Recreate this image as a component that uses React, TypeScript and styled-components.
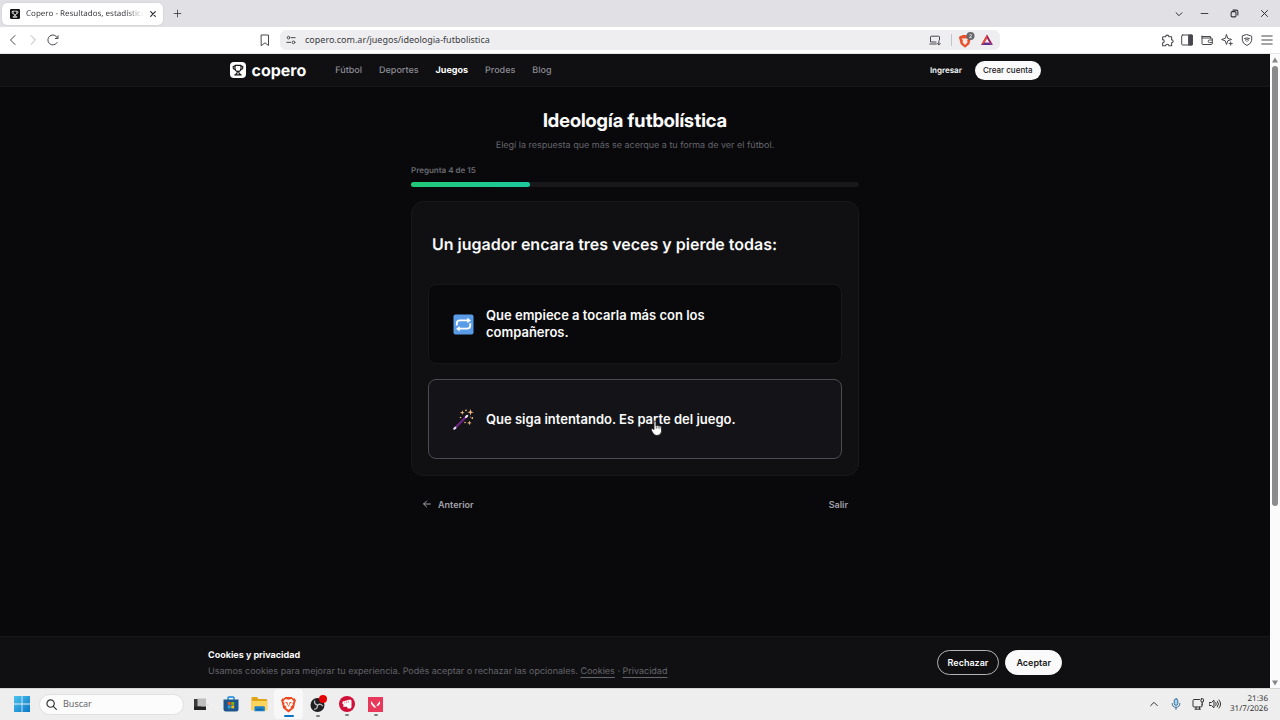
import React from "react";
import styled, { createGlobalStyle } from "styled-components";

const GlobalStyle = createGlobalStyle`
  * { box-sizing: border-box; }
  body { margin: 0; background: #09090b; text-rendering: geometricPrecision; }
  button, input { font: inherit; color: inherit; }
  button { border: 0; padding: 0; background: none; cursor: pointer; }
  h1, h2, p { margin: 0; }
  svg { display: block; flex: none; }
`;

const ui = `"Noto Sans", "Open Sans", sans-serif`;
const site = `Inter, "Liberation Sans", sans-serif`;

const Screen = styled.div`
  display: flex;
  flex-direction: column;
  min-height: 100vh;
  font-family: ${ui};
`;

/* Browser chrome */

const TabStrip = styled.div`
  display: flex;
  align-items: center;
  height: 27px;
  padding: 0 1px 0 2px;
  background: #e0e0e5;
  color: #2c2c33;
`;

const Tab = styled.div`
  display: flex;
  align-items: center;
  width: 161px;
  height: 22px;
  padding: 0 5px 0 8px;
  border-radius: 5px;
  background: #fff;
  box-shadow: 0 0 2px #0002;
`;

const TabTitle = styled.span`
  flex: 1;
  min-width: 0;
  margin: 0 4px 0 6px;
  overflow: hidden;
  white-space: nowrap;
  font-size: 8px;
  line-height: 14px;
  color: #3c3c43;
  mask-image: linear-gradient(90deg, #000 85%, transparent);
`;

const IconButton = styled.button<{ $w?: number; $dim?: boolean }>`
  display: flex;
  align-items: center;
  justify-content: center;
  width: ${(p) => p.$w ?? 20}px;
  height: 20px;
  flex: none;
  opacity: ${(p) => (p.$dim ? 0.4 : 1)};
`;

const Group = styled.div<{ $end?: boolean }>`
  display: flex;
  align-items: center;
  margin-left: ${(p) => (p.$end ? "auto" : 0)};
`;

const Toolbar = styled.div`
  display: grid;
  grid-template-columns: minmax(90px, 1fr) minmax(0, 720px) minmax(126px, 1fr);
  align-items: center;
  height: 27px;
  padding: 0 3px;
  background: #fff;
  color: #48484f;
  border-bottom: 1px solid #e6e6ea;
`;

const NavGroup = styled(Group)`
  padding-right: 5px;
`;

const AddressBar = styled.div`
  display: flex;
  align-items: center;
  height: 20px;
  padding: 0 3px 0 1px;
  border-radius: 6px;
  background: #eeeef1;
`;

const AddressInput = styled.input`
  flex: 1;
  min-width: 0;
  margin-left: 4px;
  padding: 0;
  border: 0;
  outline: 0;
  background: none;
  font-size: 9px;
  line-height: 16px;
  color: #3a3a40;
`;

const Separator = styled.span`
  width: 1px;
  height: 12px;
  margin: 0 3px 0 6px;
  background: #c4c4ca;
`;

/* Page viewport */

const Viewport = styled.div`
  display: flex;
  flex: 1;
`;

const Site = styled.div`
  display: flex;
  flex: 1;
  flex-direction: column;
  min-width: 0;
  background: #09090b;
  color: #fafafa;
  font-family: ${site};
`;

const ScrollBar = styled.div`
  display: flex;
  flex-direction: column;
  align-items: center;
  justify-content: space-between;
  width: 10px;
  padding: 3px 0 2px;
  background: #fbfbfb;
  color: #85858a;
`;

const ScrollThumb = styled.div`
  width: 6px;
  flex: 0 0 70%;
  margin: 3px 0 auto;
  border-radius: 3px;
  background: #8b8b8e;
`;

const SiteHeader = styled.header`
  background: #101013;
  border-bottom: 1px solid #17171a;
`;

const HeaderInner = styled.div`
  display: flex;
  align-items: center;
  max-width: 811px;
  height: 32px;
  margin: 0 auto;
`;

const Brand = styled.a`
  display: flex;
  align-items: center;
  gap: 6px;
  margin-right: 29px;
  color: #fff;
  text-decoration: none;
  font-size: 16px;
  font-weight: 700;
  line-height: 20px;
`;

const Nav = styled.nav`
  display: flex;
  gap: 17px;
  padding-top: 2px;
`;

const NavLink = styled.a<{ $active?: boolean }>`
  color: ${(p) => (p.$active ? "#fff" : "#8c8c94")};
  font-size: 9px;
  font-weight: ${(p) => (p.$active ? 700 : 500)};
  line-height: 14px;
  text-decoration: none;
`;

const Account = styled.div`
  display: flex;
  align-items: center;
  gap: 13px;
  margin-left: auto;
`;

const SignIn = styled.a`
  color: #fafafa;
  font-size: 8px;
  font-weight: 600;
  line-height: 14px;
  text-decoration: none;
`;

const SignUp = styled.button`
  height: 19px;
  padding: 0 8px;
  border-radius: 10px;
  background: #fafafa;
  color: #18181b;
  font-size: 8px;
  font-weight: 500;
`;

const Main = styled.main`
  flex: 1;
  width: 100%;
  max-width: 448px;
  margin: 0 auto;
  padding-top: 20px;
`;

const Title = styled.h1`
  font-family: "Inter Display", ${site};
  font-size: 19px;
  font-weight: 700;
  line-height: 28px;
  text-align: center;
`;

const Subtitle = styled.p`
  margin-top: 4px;
  color: #65656c;
  font-size: 9px;
  line-height: 14px;
  text-align: center;
`;

const Step = styled.p`
  margin: 11px 0 6px;
  color: #6b6b72;
  font-size: 8px;
  font-weight: 600;
  line-height: 12px;
`;

const Track = styled.div`
  height: 5px;
  border-radius: 3px;
  background: #18181b;
`;

const Fill = styled.div`
  height: 100%;
  border-radius: 3px;
  background: linear-gradient(90deg, #22c877, #1cc89c);
`;

const Card = styled.section`
  margin-top: 14px;
  padding: 16px;
  border: 1px solid #18181b;
  border-radius: 12px;
  background: #101013;
`;

const Question = styled.h2`
  padding: 16px 4px 30px;
  font-size: 16px;
  font-weight: 600;
  line-height: 20px;
`;

const Options = styled.div`
  display: grid;
  gap: 15px;
`;

const Option = styled.button<{ $hover?: boolean }>`
  position: relative;
  display: flex;
  align-items: center;
  gap: 12px;
  width: 100%;
  min-height: 80px;
  padding: 8px 100px 8px 24px;
  border: 1px solid ${(p) => (p.$hover ? "#4b4b52" : "#18181b")};
  border-radius: 8px;
  background: ${(p) => (p.$hover ? "#141418" : "#09090b")};
  color: #fafafa;
  font-size: 13px;
  font-weight: 600;
  line-height: 17px;
  text-align: left;
`;

const Pointer = styled.svg`
  position: absolute;
  top: 40px;
  left: 221px;
`;

const Footer = styled.div`
  display: flex;
  justify-content: space-between;
  margin-top: 14px;
  padding: 0 11px;
`;

const TextButton = styled.button`
  display: flex;
  align-items: center;
  gap: 6px;
  height: 28px;
  color: #a1a1aa;
  font-size: 9px;
  font-weight: 600;
`;

const CookieBar = styled.aside`
  border-top: 1px solid #18181b;
  background: #101012;
`;

const CookieInner = styled.div`
  display: flex;
  align-items: center;
  gap: 6px;
  max-width: 854px;
  height: 51px;
  margin: 0 auto;
`;

const CookieCopy = styled.div`
  flex: 1;
  padding-top: 2px;
  font-size: 9px;
  line-height: 16px;
  color: #65656c;
`;

const CookieTitle = styled.h2`
  color: #fafafa;
  font-size: 9px;
  font-weight: 700;
  line-height: 16px;
`;

const CookieLink = styled.a`
  color: inherit;
  text-underline-offset: 3px;
`;

const Pill = styled.button<{ $solid?: boolean }>`
  height: 25px;
  padding: 0 10px;
  border: 1px solid ${(p) => (p.$solid ? "#fafafa" : "#b4b4b8")};
  border-radius: 13px;
  background: ${(p) => (p.$solid ? "#fafafa" : "transparent")};
  color: ${(p) => (p.$solid ? "#18181b" : "#fafafa")};
  font-size: 9px;
  font-weight: 600;
`;

/* Desktop task bar */

const TaskBar = styled.footer`
  display: flex;
  align-items: center;
  height: 32px;
  padding: 0 12px 1px 7px;
  border-top: 1px solid #d6d6d6;
  background: #eeeeee;
  color: #333;
`;

const TaskButton = styled.button<{ $state?: "open" | "active" }>`
  display: flex;
  flex-direction: column;
  align-items: center;
  justify-content: center;
  width: 29px;
  height: 30px;
  flex: none;
  border-radius: 4px;
  background: ${(p) => (p.$state === "active" ? "#f8f8f8" : "none")};
  &::after {
    content: "";
    width: ${(p) => (p.$state === "active" ? 10 : 4)}px;
    height: 2px;
    margin: 2px 0 -4px;
    border-radius: 1px;
    background: ${(p) =>
      p.$state === "active" ? "#0a74c4" : p.$state === "open" ? "#808080" : "transparent"};
  }
`;

const SearchField = styled.label`
  display: flex;
  align-items: center;
  gap: 6px;
  width: 145px;
  height: 21px;
  margin: 0 3px;
  padding: 0 6px;
  border: 1px solid #e0e0e0;
  border-radius: 11px;
  background: #fcfcfc;
`;

const SearchInput = styled.input`
  width: 100%;
  min-width: 0;
  padding: 0;
  border: 0;
  outline: 0;
  background: none;
  font-size: 9px;
  line-height: 14px;
  &::placeholder { color: #666; opacity: 1; }
`;

const Clock = styled.time`
  margin-left: 8px;
  font-size: 8px;
  line-height: 10px;
  text-align: right;
  color: #333;
`;

const Line = ({ size = 12, w = 1, children }: { size?: number; w?: number; children: React.ReactNode }) => (
  <svg width={size} height={size} viewBox="0 0 12 12" fill="none" stroke="currentColor" strokeWidth={w} strokeLinecap="round" strokeLinejoin="round" aria-hidden="true">
    {children}
  </svg>
);

const Trophy = ({ size, box, ink, radius }: { size: number; box: string; ink: string; radius: number }) => (
  <svg width={size} height={size} viewBox="0 0 16 16" fill="none" aria-hidden="true">
    <rect width="16" height="16" rx={radius} fill={box} />
    <g stroke={ink} strokeWidth="1.1" strokeLinejoin="round" strokeLinecap="round">
      <path d="M5 3.4h6v2.8C11 8.2 9.7 9.4 8 9.4S5 8.2 5 6.200z" />
      <path d="M5 4.300H3.200v.9C3.200 6.700 4.200 7.400 5.300 7.400M11 4.300h1.800v.9c0 1.500-1 2.200-2.100 2.200" />
      <path d="M7.200 9.400v1.400L5.400 12.700h5.200L8.800 10.800V9.400M4.800 12.900h6.400" />
    </g>
  </svg>
);

const RepeatEmoji = () => (
  <svg width="21" height="21" viewBox="0 0 21 21" fill="none" aria-hidden="true">
    <rect x="0.500" y="0.500" width="20" height="20" rx="2" fill="#5a9be8" />
    <path d="M3.800 11.500V9.500Q3.800 6.400 7 6.400h9M17.200 9.300v2.200q0 3.200-3.200 3.200H5" stroke="#fff" strokeWidth="1.800" />
    <path d="M14.300 3.600l3.600 2.800-3.600 2.800zM6.700 11.900l-3.600 2.800 3.600 2.800z" fill="#fff" />
  </svg>
);

const WandEmoji = () => (
  <svg width="21" height="21" viewBox="0 0 21 21" aria-hidden="true">
    <path d="M2 19L13.500 7.500" stroke="#6b2480" strokeWidth="2.400" strokeLinecap="round" />
    <path d="M1.300 19.700l1-1M13 8l1.200-1.200" stroke="#e8dff0" strokeWidth="2.200" strokeLinecap="round" />
    <g fill="#eebb84">
      <path d="M17.500 0l.8 2.500 2.500.8-2.500.8-.8 2.500-.8-2.500-2.500-.8 2.500-.8zM9.300 1.300l.6 1.800 1.800.6-1.800.6-.6 1.800-.6-1.800-1.800-.6 1.800-.6zM16.400 11.500l.6 1.800 1.800.6-1.800.6-.6 1.800-.6-1.800-1.800-.6 1.800-.6z" />
      <circle cx="13" cy="1.300" r="0.900" />
      <circle cx="19.300" cy="9" r="0.900" />
      <circle cx="7.500" cy="8.500" r="0.800" />
      <circle cx="12" cy="13.500" r="0.800" />
      <circle cx="17.300" cy="8" r="0.500" />
    </g>
  </svg>
);

const BraveLion = ({ size }: { size: number }) => (
  <svg width={size} height={size} viewBox="0 0 16 16" aria-hidden="true">
    <path d="M5 1h6l1.300 1.300 1.300-.2L15 4l-.5 1.500L13 11.500 8 15.500 3 11.500 1.500 5.500 1 4l1.400-1.900 1.300.2z" fill="#ee4a20" />
    <path d="M8 3.500l3-.7 1.900 2.400-1.200 1.700.3 1.500-2.200 1.700.6 1.300L8 13l-2.400-1.600.6-1.300L4 8.400l.3-1.500-1.200-1.700L5 2.800z" fill="#fff" />
    <path d="M4.500 5.300l2.500.5.4 1.700L8 9.500l.6-2 .4-1.700 2.500-.5-2 2L8 10.300 6.500 7.300z" fill="#ee4a20" />
  </svg>
);

const BraveShield = () => (
  <svg width="18" height="18" viewBox="0 0 18 18" aria-hidden="true">
    <g transform="translate(1 3) scale(.88)">
      <path d="M5 1h6l1.300 1.300 1.300-.2L15 4l-.5 1.500L13 11.500 8 15.500 3 11.500 1.500 5.500 1 4l1.400-1.900 1.300.2z" fill="#e6502c" />
      <path d="M4.200 4.500l2.800.8L8 4.500l1 .8 2.800-.8-1.400 3 .5 2L8 12.500 5.100 9.500l.5-2z" fill="#fbe8e2" />
    </g>
    <circle cx="13.500" cy="5" r="4" fill="#66666c" />
    <path d="M12.500 4q1-1.200 1.900-.2c.5.800-1 1.900-1.900 2.800h2.200" fill="none" stroke="#fff" strokeWidth=".8" />
  </svg>
);

const OPTIONS = [
  { text: "Que empiece a tocarla más con los compañeros.", icon: <RepeatEmoji />, hover: false },
  { text: "Que siga intentando. Es parte del juego.", icon: <WandEmoji />, hover: true },
];

const NAV = ["Fútbol", "Deportes", "Juegos", "Prodes", "Blog"];

export default function App() {
  return (
    <Screen>
      <GlobalStyle />
      <TabStrip>
        <Tab>
          <Trophy size={10} box="#111" ink="#fff" radius={2} />
          <TabTitle>Copero - Resultados, estadística</TabTitle>
          <IconButton $w={10} aria-label="Cerrar pestaña">
            <Line size={8} w={1.8}><path d="M2.500 2.500l7 7M9.500 2.500l-7 7" /></Line>
          </IconButton>
        </Tab>
        <IconButton $w={28} aria-label="Nueva pestaña">
          <Line size={9}><path d="M6 1.500v9M1.500 6h9" /></Line>
        </IconButton>
        <Group $end>
          <IconButton aria-label="Buscar pestañas">
            <Line size={10} w={1.2}><path d="M2.500 4.500L6 8l3.500-3.500" /></Line>
          </IconButton>
          <IconButton $w={30} aria-label="Minimizar">
            <Line size={9} w={1.2}><path d="M1.500 6h9" /></Line>
          </IconButton>
          <IconButton $w={30} aria-label="Restaurar">
            <Line size={9} w={1.4}><rect x="1.500" y="3.500" width="6.500" height="7" rx="1.500" /><path d="M4 1.500h4.500q2 0 2 2V8" /></Line>
          </IconButton>
          <IconButton $w={30} aria-label="Cerrar">
            <Line size={9} w={1.300}><path d="M2 2l8 8M10 2l-8 8" /></Line>
          </IconButton>
        </Group>
      </TabStrip>

      <Toolbar>
        <NavGroup>
          <IconButton aria-label="Atrás"><Line><path d="M8 1.500L3.500 6 8 10.500" /></Line></IconButton>
          <IconButton $dim aria-label="Adelante"><Line><path d="M4 1.500L8.500 6 4 10.500" /></Line></IconButton>
          <IconButton aria-label="Recargar"><Line><path d="M10.200 8.500A5 5 0 1 1 10.500 4M11 1.800V4.500H8.300" /></Line></IconButton>
          <Group $end>
            <IconButton aria-label="Guardar marcador"><Line><path d="M2.500 1h7v10.500L6 8.800l-3.500 2.700z" /></Line></IconButton>
          </Group>
        </NavGroup>
        <AddressBar>
          <IconButton aria-label="Información del sitio">
            <Line size={10} w={1.200}><circle cx="3" cy="3.200" r="1.600" /><path d="M6.500 3.200H11M1 8.800h4.500" /><circle cx="9" cy="8.800" r="1.600" /></Line>
          </IconButton>
          <AddressInput aria-label="Dirección" defaultValue="copero.com.ar/juegos/ideologia-futbolistica" />
          <IconButton aria-label="Instalar">
            <Line size={12}><path d="M10.500 6V3q0-.8-.8-.8H2.300q-.8 0-.8.800v5h5.500M.8 10h6.500M9.800 7v3.800M8.300 9.400l1.500 1.500 1.500-1.500" /></Line>
          </IconButton>
          <Separator />
          <IconButton $w={22} aria-label="Escudos"><BraveShield /></IconButton>
          <IconButton aria-label="Recompensas">
            <svg width="12" height="12" viewBox="0 0 12 12" aria-hidden="true">
              <path d="M6 .5L0 11h12L6 7.500z" fill="#662d91" />
              <path d="M6 .5L0 11l4-2.500L6 4.800z" fill="#f04e2f" />
              <path d="M6 .5L12 11 8 8.500 6 4.800z" fill="#9e1f63" />
              <path d="M6 4.800L3.900 8.500h4.200z" fill="#fff" />
            </svg>
          </IconButton>
        </AddressBar>
        <Group $end>
          <IconButton aria-label="Extensiones"><Line size={13}><path d="M2 2.500h2.300a1.500 1.500 0 0 1 3 0h2.500v2.800a1.400 1.400 0 0 1 0 2.800v2.800H7.300a1.500 1.500 0 0 0-3 0H1.500V8.200a1.500 1.500 0 0 0 0-3V3q0-.5.5-.5" /></Line></IconButton>
          <IconButton aria-label="Panel lateral"><Line><rect x=".7" y="1" width="10.600" height="10" rx="1" /><path d="M8 1h3.300v10H8z" fill="currentColor" /></Line></IconButton>
          <IconButton aria-label="Billetera"><Line><path d="M1 2.500h8.500V4M1 2v7.500q0 1 1 1h8.300q1 0 1-1V5q0-1-1-1H1M11.300 6H8.500a1.300 1.300 0 0 0 0 2.600h2.800" /></Line></IconButton>
          <IconButton aria-label="Asistente"><Line><path d="M5.500.8L6.800 4.300 10.500 5.500 6.800 6.800 5.500 10.500 4.200 6.800.6 5.500l3.600-1.200zM9.700 8v3.200M8.100 9.600h3.200" /></Line></IconButton>
          <IconButton aria-label="VPN"><Line><path d="M6 .6l4.700 1.600v4Q10.500 9.500 6 11.500 1.500 9.500 1.300 6.200v-4zM3.500 4.500Q6 3.200 8.500 4.500M4.300 6q1.700-.9 3.400 0M6 7.600v.1" /></Line></IconButton>
          <IconButton aria-label="Menú"><Line><path d="M.8 2h10.400M.8 6h10.400M.8 10h10.400" /></Line></IconButton>
        </Group>
      </Toolbar>

      <Viewport>
        <Site>
          <SiteHeader>
            <HeaderInner>
              <Brand href="#"><Trophy size={16} box="#fff" ink="#18181b" radius={4} />copero</Brand>
              <Nav>
                {NAV.map((n) => (
                  <NavLink key={n} href="#" $active={n === "Juegos"}>{n}</NavLink>
                ))}
              </Nav>
              <Account>
                <SignIn href="#">Ingresar</SignIn>
                <SignUp>Crear cuenta</SignUp>
              </Account>
            </HeaderInner>
          </SiteHeader>

          <Main>
            <Title>Ideología futbolística</Title>
            <Subtitle>Elegí la respuesta que más se acerque a tu forma de ver el fútbol.</Subtitle>
            <Step>Pregunta 4 de 15</Step>
            <Track role="progressbar" aria-label="Progreso" aria-valuenow={4} aria-valuemin={0} aria-valuemax={15}>
              <Fill style={{ width: `${(4 / 15) * 100}%` }} />
            </Track>
            <Card>
              <Question>Un jugador encara tres veces y pierde todas:</Question>
              <Options>
                {OPTIONS.map((o) => (
                  <Option key={o.text} $hover={o.hover}>
                    {o.icon}
                    <span>{o.text}</span>
                    {o.hover && (
                      <Pointer width="14" height="17" viewBox="0 0 14 17" aria-hidden="true">
                        <path d="M4 1.500q1.300-1 2 .3V6l.5-.5q1-.5 1.600.5.900-.8 1.700.2 1.300-.6 1.700.8v4.500q-.3 4-4.500 4-2.500 0-3.800-2L1.200 10q-.2-1.500 1.300-1.300L4 9.500z" fill="#fff" stroke="#18181b" strokeWidth=".8" />
                        <path d="M6.300 6v2.500M8.100 6.500v2M9.900 7v1.800" stroke="#333" strokeWidth=".7" />
                      </Pointer>
                    )}
                  </Option>
                ))}
              </Options>
            </Card>
            <Footer>
              <TextButton><Line size={10} w={1.200}><path d="M10 6H2M5.500 2.500L2 6l3.500 3.500" /></Line>Anterior</TextButton>
              <TextButton>Salir</TextButton>
            </Footer>
          </Main>

          <CookieBar>
            <CookieInner>
              <CookieCopy>
                <CookieTitle>Cookies y privacidad</CookieTitle>
                <p>
                  Usamos cookies para mejorar tu experiencia. Podés aceptar o rechazar las opcionales.{" "}
                  <CookieLink href="#">Cookies</CookieLink> · <CookieLink href="#">Privacidad</CookieLink>
                </p>
              </CookieCopy>
              <Pill>Rechazar</Pill>
              <Pill $solid>Aceptar</Pill>
            </CookieInner>
          </CookieBar>
        </Site>
        <ScrollBar aria-hidden="true">
          <svg width="6" height="6" viewBox="0 0 6 6"><path d="M3 .5L6 5.500H0z" fill="currentColor" /></svg>
          <ScrollThumb />
          <svg width="6" height="6" viewBox="0 0 6 6"><path d="M3 5.500L6 .5H0z" fill="currentColor" /></svg>
        </ScrollBar>
      </Viewport>

      <TaskBar>
        <TaskButton aria-label="Inicio">
          <svg width="16" height="16" viewBox="0 0 16 16" aria-hidden="true">
            <defs><linearGradient id="win" x1="0" y1="0" x2="1" y2="1"><stop stopColor="#4cc4ee" /><stop offset="1" stopColor="#0a78c8" /></linearGradient></defs>
            <path d="M0 0h7.600v7.600H0zM8.400 0H16v7.600H8.400zM0 8.400h7.600V16H0zM8.400 8.400H16V16H8.400z" fill="url(#win)" />
          </svg>
        </TaskButton>
        <SearchField>
          <Line size={11} w={1.300}><circle cx="5" cy="5" r="4" /><path d="M8 8l3.300 3.300" /></Line>
          <SearchInput aria-label="Buscar" placeholder="Buscar" />
        </SearchField>
        <TaskButton aria-label="Vista de tareas">
          <svg width="16" height="16" viewBox="0 0 16 16" aria-hidden="true">
            <path d="M0 3h7v11H0z" fill="#3a3a3a" /><path d="M3.500 2.500h8.500v8H3.500z" fill="#bdbdbd" /><path d="M0 10.500h12V14H0z" fill="#222" /><path d="M13 8h1.500v2H13z" fill="#ddd" />
          </svg>
        </TaskButton>
        <TaskButton aria-label="Tienda">
          <svg width="16" height="16" viewBox="0 0 16 16" aria-hidden="true">
            <path d="M5 4V1.800q0-.8.800-.8h4.400q.8 0 .8.800V4" fill="none" stroke="#1589d6" strokeWidth="1.400" />
            <path d="M.5 3.500h15V13q0 2.500-2.500 2.500H3Q.5 15.500.5 13z" fill="#1c568c" />
            <path d="M4.800 6h2.900v2.900H4.800z" fill="#f25022" /><path d="M8.300 6h2.900v2.900H8.300z" fill="#7fba00" /><path d="M4.800 9.500h2.900v2.900H4.800z" fill="#28a8ea" /><path d="M8.300 9.500h2.900v2.900H8.300z" fill="#ffb900" />
          </svg>
        </TaskButton>
        <TaskButton aria-label="Explorador">
          <svg width="17" height="16" viewBox="0 0 17 16" aria-hidden="true">
            <path d="M.5 2q0-1 1-1H6l1.500 2H15q1.200 0 1.200 1v10H.5z" fill="#e0a41c" /><path d="M.5 5h15.700v9.500H.5z" fill="#fbd55b" /><path d="M3.500 15.300v-4q0-1 1-1h8.300q1 0 1 1v4z" fill="#1b7fc8" /><path d="M5.500 13h6v1h-6z" fill="#0d5c9e" />
          </svg>
        </TaskButton>
        <TaskButton $state="active" aria-label="Brave"><BraveLion size={17} /></TaskButton>
        <TaskButton $state="open" aria-label="OBS">
          <svg width="18" height="18" viewBox="0 0 18 18" aria-hidden="true">
            <circle cx="8.500" cy="10" r="7" fill="#1f1f22" />
            <g fill="none" stroke="#b9b9bc" strokeWidth="1.300"><path d="M8.500 10Q4.500 9 5.800 5.500M8.500 10q3.500-2 5.300 1.200M8.500 10q.3 4-3.500 4.200" /></g>
            <circle cx="14" cy="4" r="4" fill="#e60000" />
          </svg>
        </TaskButton>
        <TaskButton $state="open" aria-label="Riot Client">
          <svg width="16" height="16" viewBox="0 0 16 16" aria-hidden="true">
            <circle cx="8" cy="8" r="8" fill="#d1103a" />
            <path d="M3.600 5.500L11.200 3.600l1.300 1v6.600l-1 1.300H8.800l-1-1.700H4.200l.4-2.300-1.200-.6z" fill="#fff" />
            <path d="M5.800 5.600v2M7.600 5.200v2M9.400 4.800v2.200" stroke="#d1103a" strokeWidth=".4" />
          </svg>
        </TaskButton>
        <TaskButton $state="open" aria-label="Valorant">
          <svg width="15" height="15" viewBox="0 0 15 15" aria-hidden="true">
            <path d="M0 0h15v15H0z" fill="#e8395a" /><path d="M3 4l5.300 6.600H6L3 6.800zM12 4L8.200 8.800h2.200L12 6.800z" fill="#fff" />
          </svg>
        </TaskButton>
        <Group $end>
          <IconButton aria-label="Iconos ocultos"><Line size={10} w={1.200}><path d="M2 8l4-4 4 4" /></Line></IconButton>
          <IconButton $w={24} aria-label="Micrófono">
            <svg width="12" height="12" viewBox="0 0 12 12" fill="none" stroke="#38709f" strokeLinecap="round" aria-hidden="true">
              <rect x="4.200" y=".8" width="3.600" height="6.500" rx="1.800" fill="#a9d0ee" /><path d="M2.200 5.500q0 3.800 3.800 3.800t3.800-3.800M6 9.300v2.200" />
            </svg>
          </IconButton>
          <IconButton aria-label="Red"><Line><path d="M7.500 1.500H2q-1 0-1 1V8q0 1 1 1h7q1 0 1-1V6M4 9v2M7.500 9v2M3 11.200h5.500" /><rect x="9" y=".8" width="2.500" height="3.200" rx=".5" /><path d="M10.200 4v3" /></Line></IconButton>
          <IconButton $w={14} aria-label="Volumen"><Line><path d="M.6 4.500h1.900L5 2.200v7.600L2.500 7.500H.6zM6.800 4.500q1.200 1.500 0 3M8.400 3.200q2.400 2.800 0 5.600M10 2q3.400 4 0 8" /></Line></IconButton>
          <Clock dateTime="2026-07-31T21:36">21:36<br />31/7/2026</Clock>
        </Group>
      </TaskBar>
    </Screen>
  );
}
